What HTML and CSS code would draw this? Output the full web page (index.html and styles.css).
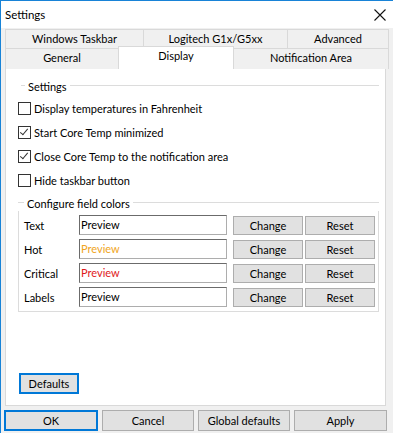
FILE: index.html
```html
<!DOCTYPE html>
<html lang="en">
<head>
    <meta charset="UTF-8">
    <title>Settings</title>
    <link rel="stylesheet" href="styles.css">
</head>
<body>
    <div class="window">
        <div class="titlebar">
            <span class="title">Settings</span>
            <svg class="close" width="12" height="12" viewBox="0 0 12 12">
                <path d="M0.5 0.5 L11.5 11.5 M11.5 0.5 L0.5 11.5" stroke="#111" stroke-width="1.1" fill="none"/>
            </svg>
        </div>
        <div class="dialog">
            <div class="tabs">
                <div class="tabrow back">
                    <div class="tab">Windows Taskbar</div>
                    <div class="tab">Logitech G1x/G5xx</div>
                    <div class="tab">Advanced</div>
                </div>
                <div class="tabrow front">
                    <div class="tab">General</div>
                    <div class="tab selected">Display</div>
                    <div class="tab">Notification Area</div>
                </div>
            </div>
            <div class="panel">
                <div class="group flat">
                    <div class="legend"><span>Settings</span></div>
                    <label class="check"><span class="box"></span>Display temperatures in Fahrenheit</label>
                    <label class="check"><span class="box checked"></span>Start Core Temp minimized</label>
                    <label class="check"><span class="box checked"></span>Close Core Temp to the notification area</label>
                    <label class="check"><span class="box"></span>Hide taskbar button</label>
                </div>
                <div class="group colors">
                    <div class="legend"><span>Configure field colors</span></div>
                    <div class="color-row">
                        <span class="name">Text</span>
                        <div class="preview">Preview</div>
                        <button class="btn">Change</button>
                        <button class="btn">Reset</button>
                    </div>
                    <div class="color-row">
                        <span class="name">Hot</span>
                        <div class="preview hot">Preview</div>
                        <button class="btn">Change</button>
                        <button class="btn">Reset</button>
                    </div>
                    <div class="color-row">
                        <span class="name">Critical</span>
                        <div class="preview critical">Preview</div>
                        <button class="btn">Change</button>
                        <button class="btn">Reset</button>
                    </div>
                    <div class="color-row">
                        <span class="name">Labels</span>
                        <div class="preview">Preview</div>
                        <button class="btn">Change</button>
                        <button class="btn">Reset</button>
                    </div>
                </div>
                <button class="btn focus defaults">Defaults</button>
            </div>
            <div class="footer">
                <button class="btn focus">OK</button>
                <button class="btn">Cancel</button>
                <button class="btn">Global defaults</button>
                <button class="btn">Apply</button>
            </div>
        </div>
    </div>
</body>
</html>
```

FILE: styles.css
```css
body {
    margin: 0;
    font-family: Lato, "Noto Sans", sans-serif;
    font-size: 11px;
    color: #000;
    background: #f0f0f0;
}
.window {
    width: 392px;
    height: 432px;
    border-left: 1px solid #1883d7;
    border-top: 1px solid #1883d7;
    background: #f0f0f0;
    overflow: hidden;
}
.titlebar {
    height: 27px;
    background: #fff;
    display: flex;
    align-items: center;
    justify-content: space-between;
    padding: 0 7px 0 4px;
}
.title {
    font-size: 11.5px;
}
.dialog {
    padding: 1px 4px 0 4px;
}
.tabs {
    width: 383px;
}
.tabrow {
    display: grid;
    height: 19px;
}
.back {
    grid-template-columns: 138px 144px 101px;
}
.front {
    grid-template-columns: 113px 115px 155px;
}
.tab {
    border: 1px solid #d9d9d9;
    border-bottom: none;
    margin-right: -1px;
    text-align: center;
    line-height: 18px;
    background: #f0f0f0;
}
.tab.selected {
    background: #fff;
    margin-top: -2px;
    height: 22px;
    line-height: 18px;
    position: relative;
    z-index: 1;
}
.panel {
    width: 381px;
    background: #fff;
    border: 1px solid #d9d9d9;
    padding: 0 8px 0 12px;
    box-sizing: border-box;
    height: 339px;
    display: flex;
    flex-direction: column;
}
.legend {
    display: flex;
    align-items: center;
    height: 16px;
}
.legend span {
    padding: 0 3px;
    background: #fff;
}
.flat {
    margin: 10px 0 0 3px;
    width: 358px;
}
.flat .legend {
    background: linear-gradient(#fff 7px, #dcdcdc 7px, #dcdcdc 8px, #fff 8px);
    padding-left: 4px;
}
.check {
    display: flex;
    align-items: center;
    height: 24px;
    margin-left: -3px;
}
.flat .legend + .check {
    margin-top: 2px;
}
.box {
    width: 11px;
    height: 11px;
    border: 1px solid #333;
    margin-right: 3px;
    position: relative;
    background: #fff;
}
.box.checked::after {
    content: "";
    position: absolute;
    left: 3px;
    top: 0px;
    width: 3px;
    height: 7px;
    border: solid #333;
    border-width: 0 1.5px 1.5px 0;
    transform: rotate(40deg);
}
.colors {
    margin-top: 11px;
    width: 361px;
    height: 109px;
    border: 1px solid #dcdcdc;
    border-top: none;
    box-sizing: border-box;
    padding: 0 0 0 5px;
}
.colors .legend {
    margin-top: -8px;
    background: linear-gradient(#fff 7px, #dcdcdc 7px, #dcdcdc 8px, #fff 8px);
    margin-left: -6px;
    margin-right: -1px;
    padding-left: 6px;
}
.color-row {
    display: grid;
    grid-template-columns: 53px 152px 70px 70px;
    column-gap: 2px;
    align-items: center;
    height: 24px;
}
.colors .legend + .color-row {
    margin-top: 2px;
}
.preview {
    height: 18px;
    border: 1px solid #adadad;
    border-top-color: #6b6b6b;
    border-left-color: #6b6b6b;
    line-height: 18px;
    padding-left: 1px;
    background: #fff;
    margin-right: 4px;
}
.preview.hot {
    color: #f0a524;
}
.preview.critical {
    color: #e0181b;
}
.btn {
    font-family: inherit;
    font-size: 11px;
    color: #000;
    background: #e1e1e1;
    border: 1px solid #adadad;
    height: 19px;
    padding: 0;
    line-height: 15px;
}
.btn.focus {
    border: 2px solid #0078d7;
}
.defaults {
    width: 60px;
    height: 21px;
    margin-top: auto;
    margin-bottom: 11px;
    margin-left: 1px;
}
.footer {
    display: grid;
    grid-template-columns: 94px 92px 92px 93px;
    column-gap: 4px;
    padding-top: 4px;
    margin-left: -1px;
}
.footer .btn {
    height: 21px;
}
```
